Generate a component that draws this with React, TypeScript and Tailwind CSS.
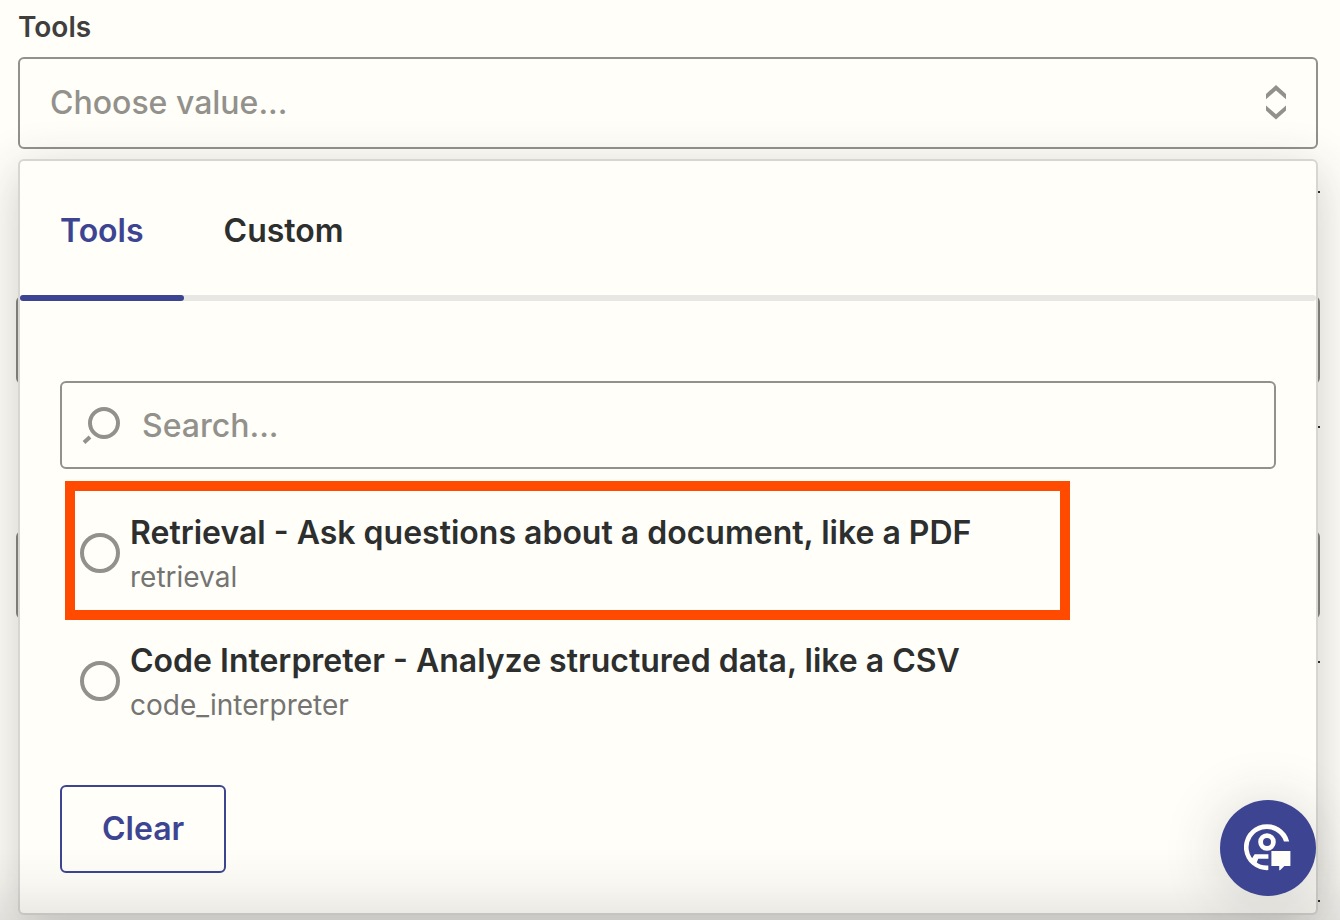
import React, { useState } from 'react';

const tabs = ['Tools', 'Custom'];

const options = [
  { value: 'retrieval', title: 'Retrieval - Ask questions about a document, like a PDF', highlighted: true },
  { value: 'code_interpreter', title: 'Code Interpreter - Analyze structured data, like a CSV', highlighted: false },
];

const SortIcon = () => (
  <svg className="w-5 h-9" viewBox="0 0 20 36" fill="currentColor" aria-hidden="true">
    <path d="M10 0L20 9V14.2L10 5.4L0 14.2V9Z" />
    <path d="M10 34.6L20 25.6V20.4L10 29.2L0 20.4V25.6Z" />
  </svg>
);

const SearchIcon = () => (
  <svg className="w-10 h-10 shrink-0" viewBox="0 0 40 40" fill="none" stroke="currentColor" strokeWidth="4" aria-hidden="true">
    <circle cx="22" cy="18" r="14" />
    <path d="M2 37.5L8 32" />
  </svg>
);

const SupportIcon = () => (
  <svg className="w-12 h-12" viewBox="0 0 48 48" fill="none" aria-hidden="true">
    <path d="M45.2 17.4H40A18.2 18.2 0 1 0 24.3 41.4V46.1A23 23 0 1 1 45.2 17.4Z" fill="#fffef9" />
    <circle cx="23" cy="18" r="6.4" stroke="#fffef9" strokeWidth="4.8" />
    <path d="M10.6 30.2H24.4V34.8H14.2L12.4 39.4L7 36Z" fill="#fffef9" />
    <path d="M27.4 27H46.4V42H40.4L36 46.2H35.2V42H27.4Z" fill="#fffef9" />
  </svg>
);

const App: React.FC = () => {
  const [activeTab, setActiveTab] = useState('Tools');
  const [selected, setSelected] = useState('');
  const [query, setQuery] = useState('');

  const visible = options.filter((option) => option.title.toLowerCase().includes(query.toLowerCase()));

  return (
    <div className="relative min-h-screen bg-[#fffef9] font-['Inter',sans-serif] text-[#2d2e2e]">
      <main className="pl-4 pr-5 pt-[9px]">
        {/* Tools field */}
        <div className="relative mx-0.5">
          <label htmlFor="tools" className="block pb-3 text-[28px] leading-9 font-semibold text-[#403f3e]">
            Tools
          </label>
          <button
            id="tools"
            type="button"
            aria-expanded="true"
            className="flex h-[92px] w-full items-center justify-between rounded-md border-2 border-[#92918b] pl-[30px] pr-[30px] text-[32px] leading-10 font-medium text-[#92918b]"
          >
            Choose value...
            <SortIcon />
          </button>

          {/* Dropdown menu */}
          <div className="absolute inset-x-0 top-full z-10 mt-[10px] rounded-md border-2 border-[#d7d6d2] bg-[#fffef9] shadow-[0_12px_50px_rgba(45,46,46,0.24)]">
            <div role="tablist" className="relative flex">
              <span className="absolute inset-x-0 bottom-0 h-1.5 rounded-full bg-[#e8e7e4]"></span>
              {tabs.map((tab) => (
                <button
                  key={tab}
                  type="button"
                  role="tab"
                  aria-selected={activeTab === tab}
                  onClick={() => setActiveTab(tab)}
                  className={`relative h-[140px] px-10 text-[32px] leading-10 font-semibold ${
                    activeTab === tab ? 'text-[#3d4592]' : 'text-[#2d2e2e]'
                  }`}
                >
                  {tab}
                  {activeTab === tab && (
                    <span className="absolute inset-x-0 bottom-0 h-1.5 rounded-full bg-[#3d4592]"></span>
                  )}
                </button>
              ))}
            </div>

            <div className="px-10 pt-20 pb-10">
              <label className="flex h-[88px] items-center gap-5 rounded-md border-2 border-[#92918b] px-5 text-[#92918b]">
                <SearchIcon />
                <input
                  type="text"
                  aria-label="Search"
                  placeholder="Search..."
                  value={query}
                  onChange={(e) => setQuery(e.target.value)}
                  className="min-w-0 grow bg-transparent pt-0.5 text-[32px] leading-10 font-medium text-[#2d2e2e] outline-none placeholder:text-[#92918b]"
                />
              </label>

              <div className="mt-5">
                {visible.map((option) => (
                  <label key={option.value} className="relative flex h-32 items-center gap-[10px] pl-5">
                    {option.highlighted && (
                      <span className="pointer-events-none absolute -top-2 left-[5px] h-[139px] w-[1005px] border-10 border-[#ff4a00]"></span>
                    )}
                    <input
                      type="radio"
                      name="tool"
                      value={option.value}
                      checked={selected === option.value}
                      onChange={() => setSelected(option.value)}
                      className="size-10 shrink-0 appearance-none rounded-full border-4 border-[#92918b] checked:border-[12px] checked:border-[#3d4592]"
                    />
                    <span className="flex flex-col">
                      <span className="text-[32px] leading-12 font-semibold">{option.title}</span>
                      <span className="text-[28px] leading-10 text-[#747472]">{option.value}</span>
                    </span>
                  </label>
                ))}
              </div>

              <button
                type="button"
                onClick={() => setSelected('')}
                className="mt-10 block h-[88px] rounded-md border-2 border-[#3d4592] px-10 text-[32px] leading-10 font-semibold text-[#3d4592]"
              >
                Clear
              </button>
            </div>
          </div>
        </div>

        {/* Rest of the form, mostly covered by the open menu */}
        <div aria-hidden="true" className="flex flex-col">
          <span className="mt-[42px] size-0.5 self-end bg-[#2d2e2e]"></span>
          <div className="mt-[103px] h-[88px] rounded-md border-2 border-[#88867f]"></div>
          <span className="mt-[42px] size-0.5 self-end bg-[#2d2e2e]"></span>
          <div className="mt-[103px] h-[88px] rounded-md border-2 border-[#88867f]"></div>
          <span className="mt-[42px] size-0.5 self-end bg-[#2d2e2e]"></span>
          <span className="mt-[237px] size-0.5 self-end bg-[#2d2e2e]"></span>
        </div>
      </main>

      {/* Fade above the bottom edge */}
      <div className="pointer-events-none fixed inset-x-0 bottom-0 z-20 h-18 bg-linear-to-t from-black/9 via-black/3 to-transparent"></div>

      <button
        type="button"
        aria-label="Get help"
        className="fixed right-6 bottom-6 z-30 flex size-24 items-center justify-center rounded-full bg-[#3d4592] shadow-[0_4px_60px_rgba(45,46,46,0.2)]"
      >
        <SupportIcon />
      </button>
    </div>
  );
};

export default App;
